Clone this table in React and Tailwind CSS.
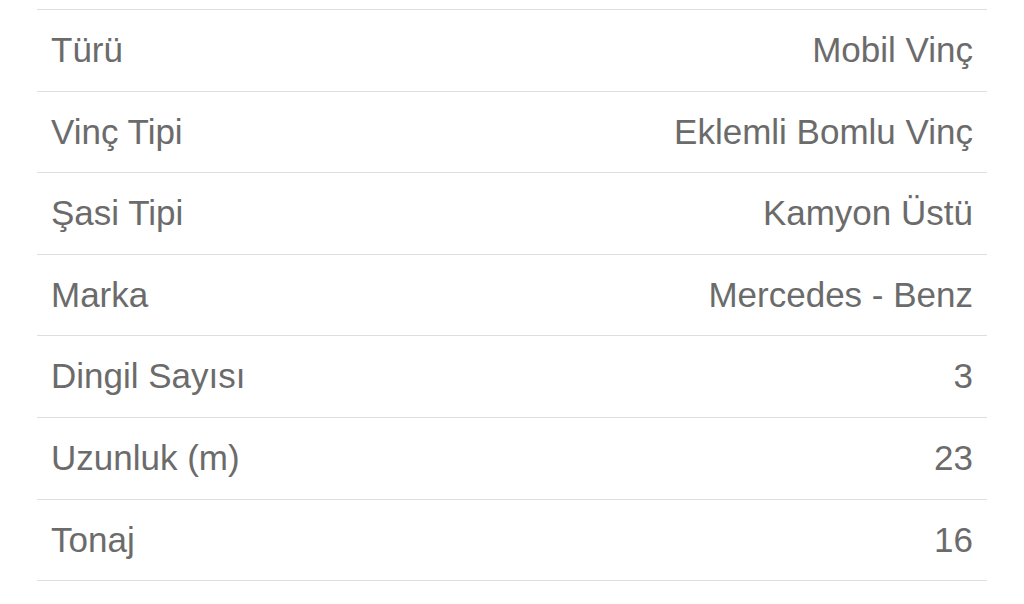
const rows = [
  ["Türü", "Mobil Vinç"],
  ["Vinç Tipi", "Eklemli Bomlu Vinç"],
  ["Şasi Tipi", "Kamyon Üstü"],
  ["Marka", "Mercedes - Benz"],
  ["Dingil Sayısı", "3"],
  ["Uzunluk (m)", "23"],
  ["Tonaj", "16"],
];

export default function App() {
  return (
    <div className="w-[1024px] h-[604px] bg-white overflow-hidden" style={{ fontFamily: '"Liberation Sans", Arial, sans-serif' }}>
      <div className="ml-[37px] w-[950px] mt-[9px] border-t border-[#dedede]">
        {rows.map(([label, value]) => (
          <div key={label} className="h-[81.6px] border-b border-[#dedede] flex items-center justify-between px-[14px] text-[35px] text-[#6b6b6b]">
            <span>{label}</span>
            <span>{value}</span>
          </div>
        ))}
      </div>
    </div>
  );
}
